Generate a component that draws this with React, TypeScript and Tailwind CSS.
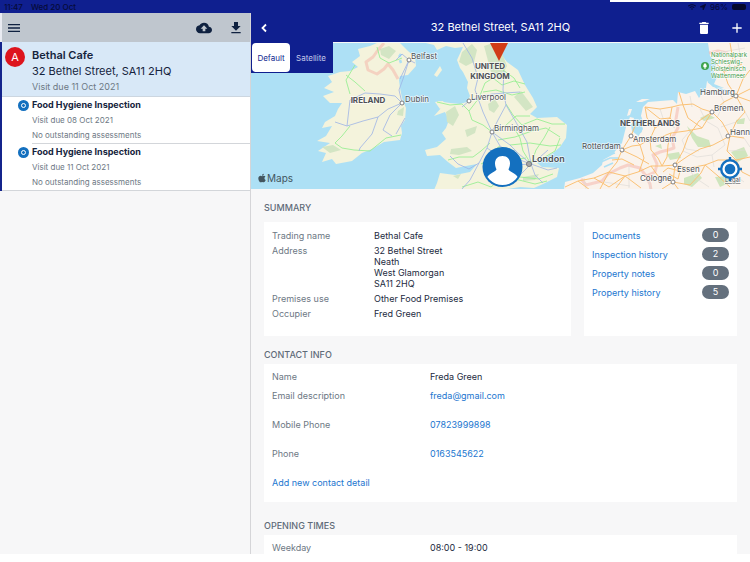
import { FaApple, FaLocationArrow, FaWifi } from 'react-icons/fa';
import { MdAdd, MdCloudUpload, MdDelete, MdDownload, MdMenu } from 'react-icons/md';

const VISITS = [
  { id: 1, title: 'Food Hygiene Inspection', due: 'Visit due 08 Oct 2021', note: 'No outstanding assessments' },
  { id: 2, title: 'Food Hygiene Inspection', due: 'Visit due 11 Oct 2021', note: 'No outstanding assessments' },
];

const RECORDS = [
  { label: 'Documents', count: 0 },
  { label: 'Inspection history', count: 2 },
  { label: 'Property notes', count: 0 },
  { label: 'Property history', count: 5 },
];

const SUMMARY = [
  { label: 'Trading name', lines: ['Bethal Cafe'] },
  { label: 'Address', lines: ['32 Bethel Street', 'Neath', 'West Glamorgan', 'SA11 2HQ'] },
  { label: 'Premises use', lines: ['Other Food Premises'] },
  { label: 'Occupier', lines: ['Fred Green'] },
];

const CONTACTS = [
  { label: 'Email description', value: 'freda@gmail.com', href: 'mailto:freda@gmail.com' },
  { label: 'Mobile Phone', value: '07823999898', href: 'tel:07823999898' },
  { label: 'Phone', value: '0163545622', href: 'tel:0163545622' },
];

// Map coordinates share one space, see the viewBox in MapView.
const CITIES = [
  { name: 'Belfast', x: 409, y: 60, tx: 411, ty: 59 },
  { name: 'Dublin', x: 402, y: 103, tx: 405, ty: 102 },
  { name: 'Liverpool', x: 469, y: 101, tx: 471, ty: 100 },
  { name: 'Birmingham', x: 492, y: 132, tx: 494, ty: 131 },
  { name: 'Amsterdam', x: 631, y: 136, tx: 633, ty: 142 },
  { name: 'Rotterdam', x: 622, y: 150, tx: 582, ty: 149 },
  { name: 'Hamburg', x: 736, y: 96, tx: 700, ty: 95 },
  { name: 'Bremen', x: 712, y: 112, tx: 714, ty: 111 },
  { name: 'Hann', x: 728, y: 136, tx: 730, ty: 135 },
  { name: 'Essen', x: 675, y: 165, tx: 677, ty: 172 },
  { name: 'Cologne', x: 673, y: 182, tx: 640, ty: 181 },
];

const LAND = [
  // Ireland
  'M377 43 L370 46 358 49 360 56 352 62 358 67 350 71 340 72 328 76 332 82 324 88 334 92 323 96 330 103 342 103 338 109 335 116 325 122 322 128 332 126 326 136 317 141 330 143 318 151 326 153 322 162 332 159 336 164 352 161 362 153 372 149 384 142 400 140 402 133 401 126 405 120 406 108 402 98 400 88 399 80 400 76 408 75 416 66 415 57 408 51 400 43Z',
  // Great Britain
  'M426 43 L434 45 437 50 446 46 455 48 463 47 457 60 460 68 463 72 468 82 467 88 470 96 467 102 460 104 450 103 437 101 442 107 434 116 445 112 449 120 446 128 442 133 446 139 437 147 425 150 427 156 440 155 448 162 456 168 466 166 477 164 470 172 455 175 440 173 437 183 434 190 501 190 520 187 534 188 543 184 557 177 559 168 542 167 537 163 553 153 560 147 566 138 567 125 557 117 537 118 530 114 537 107 533 98 525 85 518 70 507 62 500 53 498 43Z',
  // Isle of Man, Anglesey
  'M440 66 L442 70 437 77 434 75Z',
  'M435 102 L443 101 446 106 440 109Z',
];

const CONTINENT = [
  'M564 190 L565 182 580 178 593 173 602 165 603 160 612 155 622 143 626 127 630 117 634 118 632 126 636 130 638 137 643 129 640 120 643 107 648 102 660 101 673 100 677 104 678 92 686 94 695 91 699 98 703 92 706 88 707 81 713 87 724 88 714 84 717 77 713 70 717 63 710 56 708 43 751 43 751 190Z',
  'M629 109 L632 109 630 115 627 116Z',
  'M636 102 L642 99 650 99 642 102Z',
];

const WOODS = [
  'M380 49 L389 46 396 51 389 59 381 55Z',
  'M398 111 L404 107 403 116 397 115Z',
  'M322 147 L333 145 341 150 330 153Z',
  'M462 52 L472 44 477 50 474 62 466 66 459 62Z',
  'M484 46 L493 43 502 53 507 66 499 80 491 72Z',
  'M446 112 L455 106 459 115 453 126 447 122Z',
  'M465 130 L477 126 475 133 467 137Z',
  'M451 149 L467 147 472 151 459 155 450 154Z',
  'M488 104 L495 99 499 106 494 113 489 110Z',
  'M514 97 L521 91 533 107 526 111Z',
  'M453 176 L461 174 458 179Z',
  'M523 177 L539 174 535 180 523 181Z',
];

const FORESTS = [
  'M687 126 L697 136 709 140 711 147 698 147 692 138Z',
  'M700 118 L708 114 715 118 704 121Z',
  'M667 154 L679 152 681 158 670 160Z',
  'M684 178 L698 173 702 178 692 187 684 184Z',
  'M736 120 L745 118 744 124 737 124Z',
  'M731 152 L744 147 748 156 738 162Z',
  'M715 177 L728 176 731 182 720 187Z',
  'M655 146 L661 144 662 149Z',
];

const MOTORWAYS = [
  'M402 103 L395 96 380 94 365 93 350 100 347 126 363 121 378 117 388 109 402 103',
  'M402 103 L399 90 403 79 409 60 402 54 396 60',
  'M402 103 L390 115 383 130 392 136 M378 117 L372 134 360 148 359 151 M405 118 L396 134',
  'M347 126 L335 122 M400 79 L409 60 415 63',
  'M463 43 L472 58 478 78 475 90 483 112 492 132 500 146 520 160 531 164',
  'M469 101 L479 97 492 94 505 93 520 92 M504 71 L503 90 506 105 498 120 492 132',
  'M492 132 L487 148 479 163 469 169 458 164 450 156 M487 148 L499 156 515 165 531 164',
  'M492 132 L510 145 519 154 531 164 527 142 517 124 506 105',
  'M479 163 L470 180 462 189 M531 164 L520 175 506 184 M531 164 L548 170 557 168',
  'M531 164 L540 157 548 150 M531 164 L535 175 543 183 M469 101 L462 107',
];

const TRUNK_ROADS = [
  'M346 75 L355 82 365 91 M377 47 L380 58 389 63 402 58 M355 65 L346 80 350 94',
  'M335 143 L342 148 354 150 370 151 386 138 401 135 M335 143 L342 136 350 126',
  'M437 102 L450 105 462 104 469 111 472 120 483 125 492 132 505 126 516 116 530 116',
  'M469 111 L479 98 485 83 493 78 502 85 514 81 525 84 M503 70 L514 78 520 88',
  'M483 92 L496 90 512 95 525 92 M506 104 L513 115 522 125 537 119 552 124 565 124',
  'M498 140 L515 137 532 131 546 128 560 137 M510 145 L530 143 550 146 561 145',
  'M531 164 L536 150 544 138 550 127 M531 164 L523 151 520 138 513 126',
  'M448 160 L459 157 473 157 481 151 490 143 M500 146 L490 153 499 162 510 171 520 177 539 179 553 174',
  'M462 187 L478 182 491 187 503 177 519 180 535 184 547 181',
  'M540 160 L555 151 560 138 M481 164 L492 158 510 160 526 158',
];

const CONTINENT_ROADS = [
  'M565 187 L578 181 594 178 609 172 625 176 638 172 651 166 662 166 675 165',
  'M578 181 L590 190 M609 172 L600 189 M625 176 L616 188 M594 178 L609 187 625 176 641 188',
  'M622 150 L632 146 640 145 650 139 661 137 671 133 686 131 702 128 712 112 724 102 736 96 750 89',
  'M622 150 L617 162 609 172 M622 150 L637 157 649 164 M631 136 L622 150 M631 136 L640 145 644 158 639 172',
  'M631 136 L635 126 631 120 M645 107 L647 118 655 128 650 139 651 150 658 158 662 166',
  'M645 107 L660 109 672 107 680 105 693 104 702 109 712 112 M672 107 L670 118 660 125 655 128',
  'M645 107 L660 119 670 118 678 126 M712 112 L722 122 730 136 744 138 M712 112 L699 121 688 137 683 151 675 165',
  'M675 165 L688 156 700 149 713 145 730 136 736 122 745 112 736 96',
  'M675 165 L673 182 658 176 651 166 M675 165 L689 168 705 165 718 160 736 160 750 157',
  'M673 182 L690 185 701 173 705 165 718 176 730 187 M673 182 L662 189 M673 182 L679 190',
  'M736 96 L728 84 724 72 733 60 730 43 M736 96 L743 79 750 70 M736 96 L750 101',
  'M730 136 L727 151 736 160 742 172 750 176 M662 166 L667 157 668 145 671 133 M679 92 L683 105 688 118 702 128',
  'M663 172 L668 168 680 171 678 179 669 174 M612 160 L622 159 634 165 M715 62 L724 72 742 64',
];

const MINOR_ROADS = [
  'M660 109 L664 121 675 128 M690 96 L692 107 M700 109 L706 121 718 128 725 145 M683 151 L697 157 712 155 725 145',
  'M718 90 L724 102 717 118 M745 112 L750 121 M736 122 L721 127 M690 131 L682 140 686 149 699 151',
  'M689 168 L694 177 709 187 M712 155 L714 167 M744 138 L750 147 M727 151 L745 150 M726 160 L729 171 744 182',
  'M629 165 L629 188 M648 178 L651 189 M604 182 L630 186 M584 178 L586 189 M722 52 L745 48 M738 43 L741 60',
];

const BORDERS = [
  'M384 43 L378 50 373 57 366 62 368 70 377 74 384 69 388 64 393 70 398 79',
  'M678 107 L676 119 678 128 672 138 674 148 668 150 660 152 653 155 657 164 655 172 646 176 650 184 651 190',
  'M581 179 L586 185 602 181 608 174 620 168 628 165 640 168 646 176',
  'M709 53 L718 51 728 53',
];

function MapView() {
  return (
    <svg viewBox="251 43 499 146" preserveAspectRatio="xMidYMid slice" className="block h-[146px] w-full bg-[#ade0f5]" role="img" aria-label="Map">
      <g fill="#f4f3dc" strokeLinejoin="round">
        {LAND.map((d) => <path key={d} d={d} />)}
      </g>
      <g fill="#faf3ec">
        {CONTINENT.map((d) => <path key={d} d={d} />)}
      </g>
      <g fill="#d3e5c4">
        {WOODS.map((d) => <path key={d} d={d} />)}
      </g>
      <g fill="#cfe5bd">
        {FORESTS.map((d) => <path key={d} d={d} />)}
      </g>
      <path d="M631 125 L634 119 641 116 643 121 640 128 642 132 637 135 632 131Z" fill="#ade0f5" />
      <g fill="none" stroke="#ade0f5" strokeWidth="1.5">
        <path d="M601 162 L610 158 619 158 M604 167 L613 163 M605 156 L615 153 M708 82 L717 88 727 91 734 96" />
        <path d="M399 57 L401 54 M400 60 L401 63" strokeWidth="2.5" />
      </g>
      <g fill="none" stroke="#f3aba0" strokeWidth="3" strokeOpacity="0.45" strokeLinejoin="round">
        {BORDERS.map((d) => <path key={d} d={d} />)}
      </g>
      <g fill="none" stroke="#e0dcd8" strokeWidth="0.7">
        {MINOR_ROADS.map((d) => <path key={d} d={d} />)}
      </g>
      <g fill="none" stroke="#9aee94" strokeWidth="0.9" strokeLinejoin="round">
        {TRUNK_ROADS.map((d) => <path key={d} d={d} />)}
      </g>
      <g fill="none" stroke="#9db4e6" strokeWidth="0.8" strokeLinejoin="round">
        {MOTORWAYS.map((d) => <path key={d} d={d} />)}
      </g>
      <g fill="none" stroke="#fbc276" strokeWidth="1" strokeLinejoin="round">
        {CONTINENT_ROADS.map((d) => <path key={d} d={d} />)}
      </g>

      {CITIES.map((city) => (
        <circle key={city.name} cx={city.x} cy={city.y} r="2" fill="#fff" stroke="#6f6f73" strokeWidth="0.9" />
      ))}
      <circle cx="529" cy="164" r="2.6" fill="#a5a5a5" stroke="#6f6f73" strokeWidth="0.8" />
      <g className="text-[8px]" fill="#4f5156" stroke="#fff" strokeOpacity="0.7" strokeWidth="1.4" paintOrder="stroke">
        {CITIES.map((city) => <text key={city.name} x={city.tx} y={city.ty}>{city.name}</text>)}
        <text x="532" y="162" className="text-[9px] font-semibold">London</text>
        <g className="text-[8px] font-bold">
          <text x="368" y="103" textAnchor="middle">IRELAND</text>
          <text x="490" y="69" textAnchor="middle">UNITED</text>
          <text x="490" y="79" textAnchor="middle">KINGDOM</text>
          <text x="620" y="126">NETHERLANDS</text>
        </g>
        <g className="text-[6px]" fill="#3f9d4c">
          <text x="711" y="57">Nationalpark</text>
          <text x="711" y="64">Schleswig-</text>
          <text x="711" y="71">Holsteinisch</text>
          <text x="711" y="78">Wattenmeer</text>
        </g>
        <text x="725" y="182" className="text-[6px]" textDecoration="underline">Legal</text>
      </g>
      <circle cx="705" cy="66" r="4" fill="#3fa34d" />
      <path d="M705 63 q2 1.800 1.800 3.200 q-0.300 1.300-1.300 1.400 v1.400 h-1 v-1.400 q-1-0.100-1.300-1.400 q-0.200-1.400 1.800-3.200Z" fill="#fff" />

      <path d="M490 43 H508 L499 61Z" fill="#d13b16" />

      <clipPath id="person-clip">
        <circle cx="502.5" cy="167" r="18" />
      </clipPath>
      <circle cx="502.5" cy="167" r="20" fill="#1470bf" />
      <path
        clipPath="url(#person-clip)"
        d="M502.5 156 C507.5 156 510 159.5 510 163.5 C510 166 509 168 508.5 169.500 C509 171 512 172 514 173.500 C517 175.500 519 178 520 182 L520 187 H485 L485 182 C486 178 488 175.500 491 173.500 C493 172 496 171 496.500 169.500 C496 168 495 166 495 163.500 C495 159.500 497.500 156 502.5 156Z"
        fill="#fff"
      />

      <g fill="none" stroke="#1470bf" strokeWidth="2.4">
        <circle cx="730" cy="169" r="8.8" fill="#fff" />
        <path d="M730 157 v4 M730 177 v4 M718 169 h4 M738 169 h4" />
      </g>
      <circle cx="730" cy="169" r="5.3" fill="#1470bf" />
    </svg>
  );
}

function StatusBar() {
  return (
    <div className="relative flex h-[13px] shrink-0 items-center justify-between bg-[#0f1f8f] pl-1 pr-1 text-[8px] font-medium text-[#060b38]">
      <div className="flex gap-2">
        <span>11:47</span>
        <span>Wed 20 Oct</span>
      </div>
      <div className="flex items-center gap-1">
        <FaWifi className="size-2" />
        <FaLocationArrow className="size-1.5" />
        <span>96%</span>
        <span className="h-1.5 w-3.5 rounded-xs bg-[#04082b]" />
      </div>
      <div className="absolute right-0 top-0 h-0.5 w-[140px] bg-white" />
    </div>
  );
}

function Sidebar() {
  return (
    <aside className="flex w-[251px] shrink-0 flex-col border-r border-[#d5d5d8]">
      <div className="flex h-[29px] items-center justify-between border-l-2 border-[#e9ebf2] bg-[#bfc6ce] pl-1 pr-1.5 text-[#0f2140]">
        <button type="button" aria-label="Menu"><MdMenu className="size-4" /></button>
        <div className="flex items-center gap-4">
          <button type="button" aria-label="Upload"><MdCloudUpload className="size-4" /></button>
          <button type="button" aria-label="Download"><MdDownload className="size-4" /></button>
        </div>
      </div>

      <div className="border-l-2 border-[#14248c] bg-white">
        <div className="flex gap-[7px] border-b border-[#ccd6e0] bg-[#d8e8f7] pb-px pl-[3px] pt-[5px]">
          <span className="flex size-5 shrink-0 items-center justify-center rounded-full bg-[#dd141d] text-[11px] text-white">A</span>
          <div className="text-[11px] leading-4 text-[#14233c]">
            <h2 className="font-semibold">Bethal Cafe</h2>
            <p>32 Bethel Street, SA11 2HQ</p>
            <p className="text-[9px] leading-4 text-[#6d7884]">Visit due 11 Oct 2021</p>
          </div>
        </div>
        <ul className="border-b border-[#d3d6da]">
          {VISITS.map((visit) => (
            <li key={visit.id} className="group flex gap-[3px] pl-4">
              <span className="mt-[3px] flex size-[11px] shrink-0 items-center justify-center rounded-full bg-[#1470bf]">
                <span className="size-[5px] rounded-full border border-white" />
              </span>
              <div className="flex-1 border-b border-[#d3d6da] text-[8px] leading-[15px] text-[#6d7884] group-last:border-b-0">
                <h3 className="text-[9px] font-bold leading-4 text-[#14233c]">{visit.title}</h3>
                <p>{visit.due}</p>
                <p>{visit.note}</p>
              </div>
            </li>
          ))}
        </ul>
      </div>
    </aside>
  );
}

export default function App() {
  return (
    <div className="flex h-screen flex-col overflow-hidden bg-white pb-2 font-[Inter,'Liberation_Sans',sans-serif] text-[#1c2a40]">
      <StatusBar />
      <div className="flex min-h-0 flex-1 bg-[#f7f7f8]">
        <Sidebar />

        <main className="min-w-0 flex-1 overflow-hidden">
          <header className="flex h-[29px] items-center justify-between bg-[#0f1f8f] px-2 text-white">
            <button type="button" aria-label="Back" className="w-[46px]">
              <svg viewBox="0 0 10 10" className="size-[10px]" fill="none" stroke="currentColor" strokeWidth="1.8">
                <path d="M7 1.500 L3.500 5 L7 8.500" />
              </svg>
            </button>
            <h1 className="text-[11px]">32 Bethel Street, SA11 2HQ</h1>
            <div className="flex items-center gap-[17px]">
              <button type="button" aria-label="Delete"><MdDelete className="size-4" /></button>
              <button type="button" aria-label="Add" className="-mr-[3px]"><MdAdd className="size-4" /></button>
            </div>
          </header>

          <section className="relative pt-px">
            <MapView />
            <div className="absolute left-0 top-0 flex bg-[#0f1f8f] p-px text-[8px]">
              <button type="button" className="h-[29px] w-[38px] rounded-sm bg-white text-[#0f1f8f]">Default</button>
              <button type="button" className="h-[29px] w-[42px] text-[#c6cbea]">Satellite</button>
            </div>
            <div className="absolute bottom-1 left-1.5 flex items-center text-[10px] leading-[14px] text-[#43555e]">
              <FaApple className="size-[10px]" />
              <span>Maps</span>
            </div>
          </section>

          <div className="px-[13px] text-[9px] leading-[11px]">
            <h2 className="pb-[9px] pt-[13px] font-medium text-[#5f6b78]">SUMMARY</h2>
            <div className="flex gap-[13px]">
              <dl className="flex min-h-[114px] flex-1 flex-col gap-1 bg-white px-2 pt-2">
                {SUMMARY.map((row) => (
                  <div key={row.label} className="flex">
                    <dt className="w-[102px] text-[#6d7884]">{row.label}</dt>
                    <dd>{row.lines.map((line) => <div key={line}>{line}</div>)}</dd>
                  </div>
                ))}
              </dl>
              <ul className="flex w-[153px] flex-col gap-[5px] bg-white px-2 pt-[6px]">
                {RECORDS.map((record) => (
                  <li key={record.label} className="flex items-center justify-between">
                    <a href="#" className="text-[#1b76cf]">{record.label}</a>
                    <span className="h-[14px] w-[27px] rounded-full bg-[#64707d] text-center leading-[14px] text-white">{record.count}</span>
                  </li>
                ))}
              </ul>
            </div>

            <h2 className="pb-1 pt-[13px] font-medium text-[#5f6b78]">CONTACT INFO</h2>
            <div className="bg-white px-2 pb-[14px] pt-[7px]">
              <dl>
                <div className="flex pb-2">
                  <dt className="w-[158px] text-[#6d7884]">Name</dt>
                  <dd>Freda Green</dd>
                </div>
                {CONTACTS.map((row) => (
                  <div key={row.label} className="flex pb-[18px]">
                    <dt className="w-[158px] text-[#6d7884]">{row.label}</dt>
                    <dd><a href={row.href} className="text-[#1b76cf]">{row.value}</a></dd>
                  </div>
                ))}
              </dl>
              <button type="button" className="block text-[#1b76cf]">Add new contact detail</button>
            </div>

            <h2 className="pb-1 pt-[18px] font-medium text-[#5f6b78]">OPENING TIMES</h2>
            <dl className="bg-white px-2 py-[7px]">
              <div className="flex">
                <dt className="w-[158px] text-[#6d7884]">Weekday</dt>
                <dd>08:00 - 19:00</dd>
              </div>
            </dl>
          </div>
        </main>
      </div>
    </div>
  );
}
